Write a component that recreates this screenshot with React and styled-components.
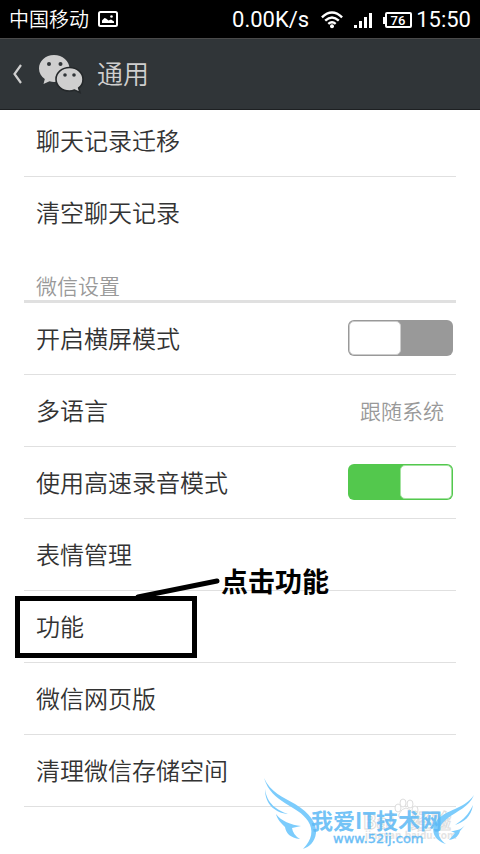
import React, { useState } from "react";
import styled, { createGlobalStyle } from "styled-components";

const GlobalStyle = createGlobalStyle`
  *,
  *::before {
    box-sizing: border-box;
  }

  body {
    margin: 0;
    background: #fff;
    color: #333;
    font-family: "Noto Sans CJK SC", sans-serif;
  }
`;

const StyledScreen = styled.div`
  display: flex;
  flex-direction: column;
  position: relative;
  min-height: 100vh;
  overflow: hidden;
`;

const StyledStatusBar = styled.div`
  display: flex;
  align-items: center;
  height: 38px;
  padding: 0 9px;
  background: #000;
  color: #fff;
`;

const StyledCarrier = styled.span`
  margin-right: 9px;
  font-size: 20px;
  font-weight: 350;
  line-height: 38px;
`;

const StyledSystemInfo = styled.div`
  display: flex;
  align-items: center;
  margin-left: auto;
  padding-top: 2px;
  font-family: Roboto, sans-serif;
  font-size: 22px;
  line-height: 36px;
`;

const StyledSystemIcons = styled.svg`
  margin: 0 4px 0 12px;
`;

const StyledHeader = styled.header`
  display: flex;
  align-items: center;
  position: relative;
  z-index: 1;
  height: 72px;
  padding: 0 12px;
  border-top: 1px solid #4a4a4a;
  border-bottom: 1px solid #1d2022;
  background: #303538;
`;

const StyledBackButton = styled.button`
  display: flex;
  align-items: center;
  margin-right: 15px;
  padding: 0;
  border: 0;
  background: none;
`;

const StyledTitle = styled.h1`
  margin: 0 0 0 13px;
  padding-bottom: 2px;
  color: #cfcfcf;
  font-size: 26px;
  font-weight: 350;
  line-height: 36px;
`;

const StyledSettings = styled.main`
  margin: -5px 24px 0;
`;

const StyledRow = styled.div`
  display: flex;
  align-items: center;
  justify-content: space-between;
  position: relative;
  height: 72px;
  padding: 0 3px 2px 12px;
  border-bottom: 1px solid ${({ $last }) => ($last ? "transparent" : "#e0e0e0")};
`;

const StyledLabel = styled.label`
  font-size: 24px;
  font-weight: 350;
  line-height: 36px;
`;

const StyledRowButton = styled.button`
  display: flex;
  flex: 1;
  align-items: center;
  justify-content: space-between;
  height: 100%;
  padding: 0 9px 0 0;
  border: 0;
  background: none;
  color: inherit;
  font-family: inherit;
  font-size: 24px;
  font-weight: 350;
  line-height: 36px;
  text-align: left;
`;

const StyledValue = styled.span`
  color: #999;
  font-size: 21px;
`;

const StyledSectionTitle = styled.h2`
  display: flex;
  align-items: flex-end;
  height: 54px;
  margin: 0;
  padding-left: 12px;
  border-bottom: 3px solid #e0e0e0;
  color: #999;
  font-size: 21px;
  font-weight: 350;
  line-height: 30px;
`;

const StyledSwitch = styled.input`
  display: flex;
  justify-content: ${({ checked }) => (checked ? "flex-end" : "flex-start")};
  appearance: none;
  width: 105px;
  height: 36px;
  margin: 0;
  padding: 1px;
  border-radius: 6px;
  background: ${({ checked }) => (checked ? "#53c84d" : "#999")};

  &::before {
    content: "";
    width: 52px;
    border: 1px solid ${({ checked }) => (checked ? "#a3e2a0" : "#ccc")};
    border-radius: 5px;
    background: #fff;
  }
`;

const StyledHighlight = styled.div`
  position: absolute;
  top: 5px;
  left: -9px;
  width: 182px;
  height: 62px;
  border: 5px solid #000;
  pointer-events: none;
`;

const StyledPointer = styled.svg`
  position: absolute;
  top: -16px;
  left: 111px;
  pointer-events: none;
`;

const StyledNote = styled.strong`
  position: absolute;
  top: -30px;
  left: 197px;
  color: #000;
  font-size: 27px;
  font-weight: 700;
  line-height: 40px;
  pointer-events: none;
`;

const StyledWatermark = styled.svg`
  position: absolute;
  right: 0;
  bottom: 0;
  pointer-events: none;
`;

const PictureIcon = () => (
  <svg width="20" height="16" viewBox="0 0 20 16" aria-hidden="true">
    <rect x="1" y="1" width="18" height="14" rx="1.5" fill="none" stroke="#fff" strokeWidth="2" />
    <path d="M4 12V9.500L6.500 7 8 7.500 10.500 9.500 13 8.500 16 10.500V12Z" fill="#fff" />
    <circle cx="13.500" cy="5.500" r="1.300" fill="#fff" />
  </svg>
);

const SystemIcons = () => (
  <StyledSystemIcons width="91" height="18" viewBox="0 0 91 18" aria-hidden="true">
    <g fill="none" stroke="#fff" strokeWidth="2.4">
      <path d="M.9 6.400Q11-3.200 21.100 6.400" />
      <path d="M4.200 9.700Q11 3.400 17.800 9.700" />
      <path d="M7.300 12.900Q11 9.600 14.700 12.900" />
    </g>
    <circle cx="11" cy="15.300" r="2" fill="#fff" />
    <path d="M33 14h3v3h-3zM38 10h3v7h-3zM43 6h3v11h-3zM48 2h3v15h-3z" fill="#fff" />
    <path d="M62 6h3v7h-3z" fill="#fff" />
    <rect x="65" y="2" width="25" height="14" rx="1" fill="none" stroke="#fff" strokeWidth="2" />
    <text x="77" y="14" fill="#fff" fontFamily="Roboto, sans-serif" fontSize="13" fontWeight="500" textAnchor="middle">76</text>
  </StyledSystemIcons>
);

const BackIcon = () => (
  <svg width="11" height="20" viewBox="0 0 11 20" aria-hidden="true">
    <path d="M9 1 2.500 10 9 19" fill="none" stroke="#cfcfcf" strokeWidth="2.2" />
  </svg>
);

const ChatLogo = () => (
  <svg width="46" height="40" viewBox="0 0 46 40" aria-hidden="true">
    <path d="M16 1C7.500 1 1 7 1 14.500 1 19 3.300 22.500 6.800 25L5.500 30 11.500 27.200C13 27.700 14.500 28 16 28 24.500 28 31.500 22 31.500 14.500 31.500 7 24.500 1 16 1Z" fill="#cfcfcf" />
    <path d="M31.500 13.500C24 13.500 18 18.600 18 25.200 18 31.800 24 37 31.500 37 33.300 37 35 36.700 36.500 36.100L42 38.500 40.700 34C43.500 31.900 45 28.800 45 25.200 45 18.600 39 13.500 31.500 13.500Z" fill="#cfcfcf" stroke="#24282a" strokeWidth="1.6" />
    <g fill="#303538">
      <circle cx="11" cy="10" r="2" />
      <circle cx="22.500" cy="10" r="2" />
      <circle cx="27" cy="21" r="1.800" />
      <circle cx="36" cy="21" r="1.800" />
    </g>
  </svg>
);

const SiteWatermark = () => (
  <StyledWatermark width="225" height="89" viewBox="0 0 225 89">
    <g fill="#fff" stroke="#ddd" strokeWidth="1">
      <ellipse cx="143" cy="43" rx="3" ry="4" />
      <ellipse cx="148" cy="38" rx="3" ry="4" />
      <ellipse cx="155" cy="39" rx="3" ry="4" />
      <ellipse cx="160" cy="45" rx="3" ry="4" />
      <path d="M151 43Q155 43 158 49 160 55 151 53 142 55 144 49 147 43 151 43Z" />
    </g>
    <g fill="#fff" stroke="#ddd" strokeWidth="1" fontFamily="'Noto Sans CJK SC', sans-serif" fontWeight="700">
      <text x="108" y="64" fontSize="20">Bai</text>
      <text x="156" y="64" fontSize="20">经验</text>
    </g>
    <text x="110" y="74" fill="#e4e4e4" fontFamily="'Noto Sans CJK SC', sans-serif" fontSize="10" fontWeight="700">jingyan.baidu.com</text>
    <g fill="#7cccfc">
      <path d="M9 13C15 27 28 32 40 39 55 48 62 59 61 68 60 77 54 82 48 84 57 75 59 65 53 56 43 40 17 39 9 13Z" />
      <path d="M10 24C12 39 22 45 33 49 21 48 10 40 10 24Z" />
      <path d="M21 49C26 56 36 60 46 61L37 63Q38 70 45 74C35 73 31 68 30 62 26 58 22 54 21 49Z" />
      <path d="M219 30C214 42 202 46 193 53 181 62 181 72 191 79 178 75 175 64 182 55 192 44 208 45 219 30Z" />
      <path d="M218 40C216 52 209 57 200 60 209 54 213 50 218 40Z" />
      <path d="M211 59C207 64 202 66 196 66L200 68 194 75C201 74 204 70 205 66Z" />
    </g>
    <g fill="#5bb8f5" fillOpacity=".85">
      <text x="56" y="64" fontFamily="'Noto Sans CJK SC', sans-serif" fontSize="22" fontWeight="700">我爱IT技术网</text>
      <text x="78" y="78" fontFamily="'DejaVu Sans', sans-serif" fontSize="13" stroke="#5bb8f5" strokeWidth=".4">www.52ij.com</text>
    </g>
  </StyledWatermark>
);

const SwitchRow = ({ id, text, defaultOn }) => {
  const [on, setOn] = useState(defaultOn);

  return (
    <StyledRow>
      <StyledLabel htmlFor={id}>{text}</StyledLabel>
      <StyledSwitch
        id={id}
        type="checkbox"
        role="switch"
        checked={on}
        onChange={() => setOn(!on)}
      />
    </StyledRow>
  );
};

const LinkRow = ({ text, value, last, children }) => (
  <StyledRow $last={last}>
    <StyledRowButton type="button">
      {text}
      {value && <StyledValue>{value}</StyledValue>}
    </StyledRowButton>
    {children}
  </StyledRow>
);

export default function App() {
  return (
    <StyledScreen>
      <GlobalStyle />
      <StyledStatusBar>
        <StyledCarrier>中国移动</StyledCarrier>
        <PictureIcon />
        <StyledSystemInfo>
          <span>0.00K/s</span>
          <SystemIcons />
          <span>15:50</span>
        </StyledSystemInfo>
      </StyledStatusBar>
      <StyledHeader>
        <StyledBackButton type="button" aria-label="返回">
          <BackIcon />
        </StyledBackButton>
        <ChatLogo />
        <StyledTitle>通用</StyledTitle>
      </StyledHeader>
      <StyledSettings>
        <LinkRow text="聊天记录迁移" />
        <LinkRow text="清空聊天记录" last />
        <StyledSectionTitle>微信设置</StyledSectionTitle>
        <SwitchRow id="landscape" text="开启横屏模式" defaultOn={false} />
        <LinkRow text="多语言" value="跟随系统" />
        <SwitchRow id="recording" text="使用高速录音模式" defaultOn />
        <LinkRow text="表情管理" />
        <LinkRow text="功能">
          <StyledHighlight />
          <StyledPointer width="86" height="24" viewBox="0 0 86 24" aria-hidden="true">
            <path d="M3 22 82 6" stroke="#000" strokeWidth="5" strokeLinecap="round" />
          </StyledPointer>
          <StyledNote>点击功能</StyledNote>
        </LinkRow>
        <LinkRow text="微信网页版" />
        <LinkRow text="清理微信存储空间" />
      </StyledSettings>
      <SiteWatermark />
    </StyledScreen>
  );
}
